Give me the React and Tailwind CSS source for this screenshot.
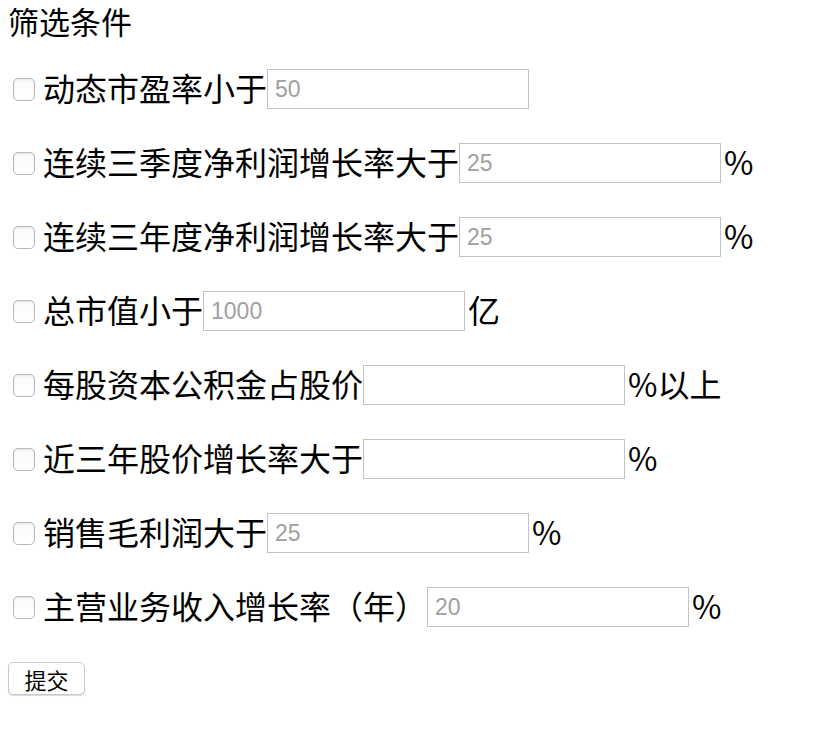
import React from 'react';

const rows = [
  { label: '动态市盈率小于', placeholder: '50', suffix: '' },
  { label: '连续三季度净利润增长率大于', placeholder: '25', suffix: '%' },
  { label: '连续三年度净利润增长率大于', placeholder: '25', suffix: '%' },
  { label: '总市值小于', placeholder: '1000', suffix: '亿' },
  { label: '每股资本公积金占股价', placeholder: '', suffix: '%以上' },
  { label: '近三年股价增长率大于', placeholder: '', suffix: '%' },
  { label: '销售毛利润大于', placeholder: '25', suffix: '%' },
  { label: '主营业务收入增长率（年）', placeholder: '20', suffix: '%' },
];

const App = () => {
  return (
    <div className="min-h-screen bg-white px-2 text-black font-['Noto_Sans_CJK_SC','Liberation_Sans',sans-serif]">
      {/* Title */}
      <h3 className="pb-[1px] text-[31px] leading-[42px]">筛选条件</h3>

      {/* Filter rows */}
      <div className="mt-[26px] flex flex-col gap-[34px]">
        {rows.map((row) => (
          <div key={row.label} className="flex h-[40px] items-center">
            <input
              type="checkbox"
              className="ml-[5px] mr-[8px] h-[23px] w-[22px] shrink-0 appearance-none rounded-[5px] border border-[#b8b8b8] bg-gradient-to-b from-[#fafafa] to-white shadow-[inset_0_1px_2px_rgba(0,0,0,0.08)]"
            />
            <span className="whitespace-nowrap pb-[5px] text-[32px] leading-[40px]">{row.label}</span>
            <input
              type="text"
              placeholder={row.placeholder}
              className="h-[40px] w-[262px] shrink-0 border border-[#c3c3c3] px-[7px] text-[23px] font-['Liberation_Sans',sans-serif] outline-none placeholder:text-[#a0a0a0]"
            />
            {row.suffix && (
              <span className="ml-[3px] whitespace-nowrap pb-[5px] text-[32px] leading-[40px]">{row.suffix}</span>
            )}
          </div>
        ))}
      </div>

      {/* Submit */}
      <button className="mt-[35px] h-[33px] w-[77px] rounded-[5px] border border-[#c8c8c8] bg-white text-[22px] leading-none shadow-[0_1px_1px_rgba(0,0,0,0.15)]">
        提交
      </button>
    </div>
  );
};

export default App;
